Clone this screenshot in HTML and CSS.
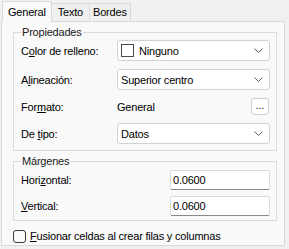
FILE: index.html
```html
<!DOCTYPE html>
<html lang="es">

<head>
  <meta charset="UTF-8">
  <title>Propiedades de celda</title>
  <link rel="stylesheet" href="styles.css">
</head>

<body>
  <div class="dialog">
    <div class="tabs">
      <div class="tab active">General</div>
      <div class="tab">Texto</div>
      <div class="tab">Bordes</div>
    </div>

    <div class="panel">
      <fieldset class="group props">
        <legend>Propiedades</legend>

        <label>C<u>o</u>lor de relleno:</label>
        <div class="combo">
          <span class="swatch"></span>
          <span class="combo-text">Ninguno</span>
          <svg class="chevron" width="9" height="5" viewBox="0 0 9 5"><path d="M0.5 0.5 L4.5 4.5 L8.5 0.5" fill="none" stroke="#606060" stroke-width="1"/></svg>
        </div>

        <label>A<u>l</u>ineación:</label>
        <div class="combo">
          <span class="combo-text">Superior centro</span>
          <svg class="chevron" width="9" height="5" viewBox="0 0 9 5"><path d="M0.5 0.5 L4.5 4.5 L8.5 0.5" fill="none" stroke="#606060" stroke-width="1"/></svg>
        </div>

        <label>For<u>m</u>ato:</label>
        <div class="format">
          <span>General</span>
          <button class="dots">...</button>
        </div>

        <label>De <u>t</u>ipo:</label>
        <div class="combo">
          <span class="combo-text">Datos</span>
          <svg class="chevron" width="9" height="5" viewBox="0 0 9 5"><path d="M0.5 0.5 L4.5 4.5 L8.5 0.5" fill="none" stroke="#606060" stroke-width="1"/></svg>
        </div>
      </fieldset>

      <fieldset class="group margins">
        <legend>Márgenes</legend>

        <label>Hori<u>z</u>ontal:</label>
        <input type="text" value="0.0600">

        <label><u>V</u>ertical:</label>
        <input type="text" value="0.0600">
      </fieldset>

      <label class="check">
        <span class="box"></span>
        <span><u>F</u>usionar celdas al crear filas y columnas</span>
      </label>
    </div>
  </div>
</body>

</html>
```

FILE: styles.css
```css
body {
  margin: 0;
  background-color: #f0f0f0;
  font-family: "Liberation Sans", Arial, sans-serif;
  font-size: 11px;
  letter-spacing: -0.2px;
  color: #000;
}

u {
  text-underline-offset: 1px;
}

.dialog {
  width: 289px;
  height: 249px;
}

/* tab strip */
.tabs {
  display: flex;
  align-items: flex-end;
  height: 21px;
  padding-left: 2px;
}

.tab {
  height: 17px;
  line-height: 17px;
  padding: 0 3px;
  border: 1px solid #d9d9d9;
  border-bottom: none;
  background-color: #f0f0f0;
  margin-left: -1px;
}

.tab:first-child {
  margin-left: 0;
  padding: 0 5px;
}

.tab:nth-child(2) {
  padding: 0 6px;
}

.tab.active {
  position: relative;
  height: 20px;
  line-height: 20px;
  margin-bottom: -1px;
  background-color: #f9f9f9;
}

/* page body */
.panel {
  box-sizing: border-box;
  width: 284px;
  height: 225px;
  margin-left: 1px;
  padding: 3px 7px 0 11px;
  border: 1px solid #dadada;
  background-color: #f9f9f9;
}

.group {
  margin: 0;
  min-width: 0;
  padding: 1px 6px 6px 7px;
  border: 1px solid #dcdcdc;
  display: grid;
  align-items: center;
}

.group legend {
  padding: 0 1px;
  line-height: 14px;
  color: #1a1a1a;
}

.group label {
  line-height: 14px;
}

.props {
  grid-template-columns: 96px 1fr;
  row-gap: 8px;
}

.margins {
  grid-template-columns: 1fr 100px;
  row-gap: 6px;
  margin-top: 3px;
  padding-top: 2px;
  padding-bottom: 4px;
}

.combo {
  box-sizing: border-box;
  height: 21px;
  display: flex;
  align-items: center;
  padding: 0 6px 0 3px;
  border: 1px solid #d2d2d2;
  border-radius: 3px;
  background-color: #fff;
}

.combo-text {
  flex: 1;
}

.swatch {
  box-sizing: border-box;
  width: 13px;
  height: 13px;
  margin-right: 5px;
  border: 1px solid #4a4a4a;
  background-color: #fff;
}

.format {
  display: flex;
  align-items: center;
  justify-content: space-between;
  height: 17px;
}

.dots {
  box-sizing: border-box;
  width: 18px;
  height: 17px;
  margin-right: 1px;
  padding: 0 0 3px;
  border: 1px solid #cfcfcf;
  border-radius: 3px;
  background-color: #fff;
  font-family: inherit;
  font-size: 11px;
  line-height: 10px;
  color: #222;
}

.margins input {
  box-sizing: border-box;
  width: 100px;
  height: 20px;
  margin: 0;
  padding: 0 2px;
  border: 1px solid #dadada;
  border-bottom-color: #8a8a8a;
  border-radius: 2px;
  background-color: #fff;
  font-family: inherit;
  font-size: 11px;
  letter-spacing: -0.2px;
  color: #000;
}

.check {
  display: flex;
  align-items: center;
  gap: 4px;
  margin-top: 8px;
  line-height: 14px;
}

.check .box {
  box-sizing: border-box;
  width: 13px;
  height: 13px;
  border: 1px solid #3a3a3a;
  border-radius: 3px;
  background-color: #fbfbfb;
}
```
